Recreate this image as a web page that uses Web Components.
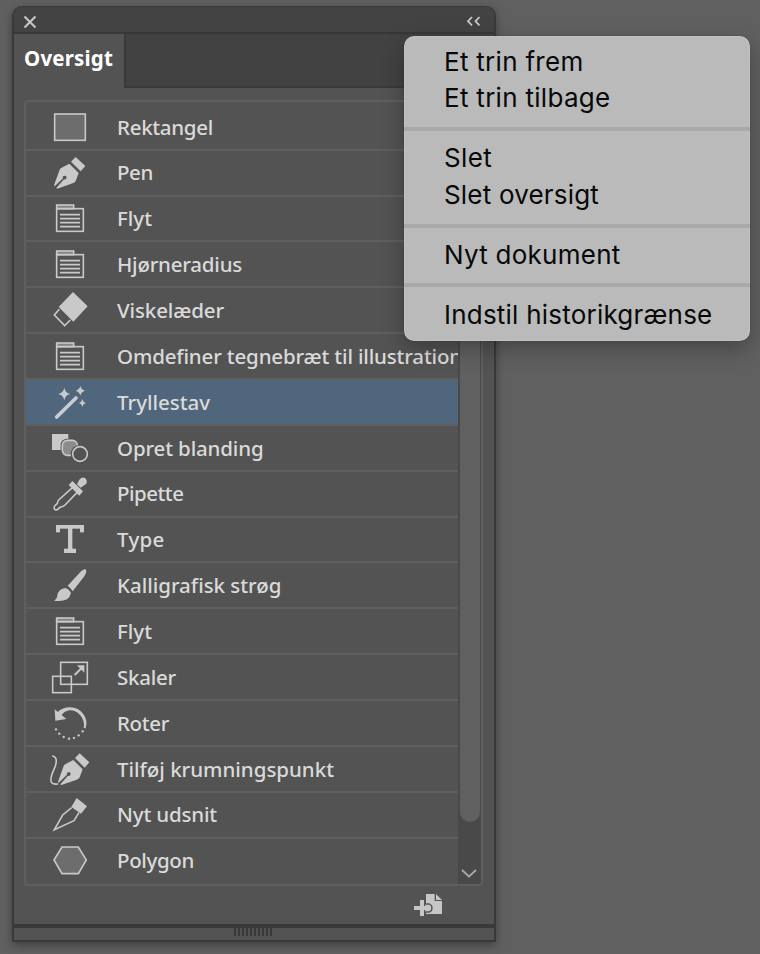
<!DOCTYPE html>
<html lang="da">
<head>
<meta charset="utf-8">
<title>Oversigt</title>
<style>
html, body{
    margin: 0;
    height: 100%;
}
body{
    width: 760px;
    height: 954px;
    overflow: hidden;
    background: #606060;
    font-family: "Noto Sans", "Open Sans", sans-serif;
}
</style>
</head>
<body>
<history-app></history-app>

<script>
// tool icons, each one drawn in a 132 unit square shown at 44px
const nib = `<path d="M167 171 196 198 182 214 153 185Z"/>
    <path d="M148 191 176 219 167 243Q164 248 158 250L112 266 109 264 132 238A5.500 5.500 0 1 0 129 235L104 259 102 256 119 209Q121 205 125 203Z"/>`;
const icons = {
    rectangle: ['84 15', '<rect x="104" y="42" width="92" height="79" fill="#6d6d6d" class="s"/>'],
    pen: ['84 153', nib],
    doc: ['84 290', `<rect x="110" y="317" width="51" height="11" fill="#858585" class="s"/>
        <rect x="110" y="328" width="80" height="68" class="n s"/>
        <path class="n s" d="M120 346H180M120 358H180M120 370H180M120 382H180"/>`],
    eraser: ['84 146', `<path d="M159 158 203 201 160 247 116 203Z"/>
        <path class="n s" d="M118 210 103 227 134 259 151 242"/>`],
    wand: ['84 16', `<path class="n" stroke="#c8cdd2" stroke-width="11" stroke-linecap="round" d="M110 127 168 70"/>
        <path d="M133 39Q136 55 151 58Q136 61 133 77Q130 61 114 58Q130 55 133 39Z"/>
        <path d="M181 34Q184 45 195 48Q184 51 181 63Q178 51 167 48Q178 45 181 34Z"/>
        <path d="M187 74Q189 83 198 85Q189 87 187 96Q185 87 177 85Q185 83 187 74Z"/>`],
    blend: ['84 153', `<rect x="96" y="177" width="49" height="48"/>
        <rect x="122" y="191" width="54" height="54" rx="19" fill="#535353"/>
        <rect x="127" y="196" width="45" height="45" rx="15" fill="#8c8c8c" class="s"/>
        <circle cx="180" cy="237" r="28" fill="#535353"/>
        <circle cx="180" cy="237" r="22" class="n s"/>`],
    pipette: ['84 291', `<path d="M171 328 178 314Q186 305 195 309Q203 316 199 326L182 338Z"/>
        <path d="M157 318 189 349 178 362 146 330Z"/>
        <path class="n s" d="M157 338 116 375Q113 379 112 385L104 393Q100 402 106 404Q113 407 118 398L125 395Q131 394 135 390L171 353"/>`],
    type: ['84 9', `<rect x="108" y="33" width="84" height="11"/><rect x="108" y="33" width="12" height="22"/>
        <rect x="180" y="33" width="12" height="22"/><rect x="144" y="36" width="13" height="78"/>
        <rect x="132" y="104" width="36" height="13"/>`],
    brush: ['84 146', `<path d="M143 214 184 170Q194 162 199 167Q200 176 193 186L158 231Q153 222 143 214Z"/>
        <path d="M137 221Q147 225 153 235Q150 249 141 255Q126 263 102 259Q112 253 112 243Q115 224 137 221Z"/>`],
    scale: ['84 16', `<rect x="122" y="38" width="80" height="66" class="n s"/>
        <rect x="98" y="80" width="56" height="49" class="n s"/>
        <path class="n" stroke="#c9c9c9" stroke-width="6" d="M164 76 186 54"/><path d="M171 47H193V69Z"/>`],
    rotate: ['84 154', `<path d="M104 179 106 213 139 208Z"/>
        <path d="M112 188Q128 173 150 173Q176 174 190 193Q204 212 197 236L191 235Q195 214 181 197Q167 181 148 182Q132 184 122 200Z"/>
        <circle cx="108" cy="239" r="3.5"/><circle cx="118" cy="252" r="3.5"/><circle cx="131" cy="262" r="3.5"/>
        <circle cx="147" cy="267" r="3.5"/><circle cx="162" cy="265" r="3.5"/><circle cx="176" cy="257" r="3.5"/><circle cx="188" cy="245" r="3.5"/>`],
    curvature: ['84 292', `<g transform="translate(12 140)">${nib}</g>
        <path class="n s" stroke-linecap="round" d="M98 319Q113 322 107 346C102 363 88 382 94 397Q98 405 113 403"/>`],
    slice: ['144 9', `<path d="M230 24 261 49 243 71 214 51Z"/>
        <path class="n s" d="M215 53 188 75 163 119 222 92 237 68"/>`],
    polygon: ['144 147', '<path class="s" fill="#6d6d6d" d="M162 213 186 174H235L259 213 235 254H186Z"/>']
};

class ToolIcon extends HTMLElement {
    connectedCallback() {
        const [origin, shapes] = icons[this.getAttribute('name')];
        this.attachShadow({ mode: 'open' }).innerHTML = `
<style>
:host{ display: block; width: 44px; height: 44px; }
svg{ display: block; overflow: visible; fill: #c9c9c9; }
.n{ fill: none; }
.s{ stroke: #c9c9c9; stroke-width: 4.8; }
</style>
<svg width="44" height="44" viewBox="${origin} 132 132">${shapes}</svg>`;
    }
}
customElements.define('tool-icon', ToolIcon);

// text tracked so that it takes the given width
class FitText extends HTMLElement {
    connectedCallback() {
        this.attachShadow({ mode: 'open' }).innerHTML = `
<style>
:host{ display: block; white-space: nowrap; }
span{ display: inline-block; }
</style>
<span><slot></slot></span>`;
        const span = this.shadowRoot.querySelector('span');
        const extra = this.getAttribute('width') - span.getBoundingClientRect().width;
        span.style.letterSpacing = extra / this.textContent.length + 'px';
    }
}
customElements.define('fit-text', FitText);

class HistoryRow extends HTMLElement {
    connectedCallback() {
        this.attachShadow({ mode: 'open' }).innerHTML = `
<style>
:host{
    display: flex;
    align-items: center;
    box-sizing: border-box;
    flex: none;
    height: 45.86px;
    padding-left: 22px;
    border-bottom: 2px solid #5f5f5f;
    overflow: hidden;
    color: #dadada;
    font-size: 20.5px;
    font-weight: 500;
    line-height: 28px;
}
:host([selected]){ background: #50667c; }
:host(:last-child){ border-color: transparent; }
fit-text{ margin: 0 0 .3px 25px; }
</style>
<tool-icon name="${this.getAttribute('icon')}"></tool-icon>
<fit-text width="${this.getAttribute('width')}">${this.textContent}</fit-text>`;
    }
}
customElements.define('history-row', HistoryRow);

class HistoryList extends HTMLElement {
    connectedCallback() {
        this.attachShadow({ mode: 'open' }).innerHTML = `
<style>
:host{
    display: flex;
    box-sizing: border-box;
    height: 786px;
    margin: 12px 11px 0 10px;
    border: 2px solid #5f5f5f;
    border-radius: 4px;
}
.rows{
    display: flex;
    flex-direction: column;
    width: 432px;
    padding-top: 2.8px;
    overflow: hidden;
}
.track{
    display: flex;
    flex-direction: column;
    align-items: center;
    justify-content: space-between;
    flex: 1;
    background: #494949;
}
.thumb{
    width: 20px;
    height: 720px;
    border-radius: 0 0 10px 10px;
    background: #606060;
}
svg{ display: block; margin: 0 2px 5px 0; }
</style>
<div class="rows"><slot></slot></div>
<div class="track">
    <div class="thumb"></div>
    <svg width="18" height="12" fill="none" stroke="#a8a8a8" stroke-width="1.8"><path d="M2 3 9 9.5 16 3"/></svg>
</div>`;
    }
}
customElements.define('history-list', HistoryList);

class HistoryPanel extends HTMLElement {
    connectedCallback() {
        this.attachShadow({ mode: 'open' }).innerHTML = `
<style>
:host{
    display: flex;
    flex-direction: column;
    box-sizing: border-box;
    width: 484px;
    height: 936px;
    border: 2px solid #393939;
    border-top-width: 1px;
    border-radius: 10px 10px 1px 1px;
    background: #535353;
    overflow: hidden;
    box-shadow: 0 3px 10px rgba(0,0,0,.35);
}
.bar{
    display: flex;
    justify-content: space-between;
    box-sizing: border-box;
    height: 27px;
    padding: 9px 13px 0 10px;
    border-bottom: 2px solid #373737;
    background: #434343;
}
.bar svg{ display: block; }
.tabs{
    display: flex;
    height: 54px;
}
.tab{
    box-sizing: border-box;
    width: 110px;
    padding: 10px 0 0 10px;
    color: #fff;
    font-size: 20.5px;
    font-weight: 700;
    line-height: 28px;
}
.rest{
    flex: 1;
    border-left: 2px solid #393939;
    border-bottom: 2px solid #393939;
    background: #424242;
}
.foot{
    display: flex;
    justify-content: flex-end;
    box-sizing: border-box;
    height: 38px;
    padding: 8px 52px 0 0;
}
.grip{
    display: flex;
    justify-content: center;
    gap: 2px;
    height: 12px;
    padding-right: 2px;
    border-top: 4px solid #393939;
}
.grip i{
    width: 2px;
    height: 8px;
    background: #383838;
}
</style>
<div class="bar">
    <svg width="12" height="12" stroke="#c4c4c4" stroke-width="2.2"><path d="M.5.5 11.5 11.5M11.5.5.5 11.5"/></svg>
    <svg width="15" height="11" fill="none" stroke="#c9c9c9" stroke-width="1.8"><path d="M6 1 2 5.2 6 9.5M13.5 1 9.5 5.2 13.5 9.5"/></svg>
</div>
<div class="tabs">
    <div class="tab"><fit-text width="89">Oversigt</fit-text></div>
    <div class="rest"></div>
</div>
<slot></slot>
<div class="foot">
    <svg width="28" height="22" viewBox="102 312 84 66" fill="#c6c6c6">
        <path d="M138 312H164V333H186V372H138Z"/>
        <path d="M168 312 186 330H168Z"/>
        <path d="M136 342H148Q156 345 156 354Q156 363 148 366H136" stroke="#535353" stroke-width="4"/>
        <path d="M120 330H132V348H145Q150 350 150 354Q150 358 145 360H132V378H120V360H102V348H120Z"/>
    </svg>
</div>
<div class="grip"><i></i><i></i><i></i><i></i><i></i><i></i><i></i><i></i><i></i><i></i></div>`;
    }
}
customElements.define('history-panel', HistoryPanel);

class MenuItem extends HTMLElement {
    connectedCallback() {
        this.attachShadow({ mode: 'open' }).innerHTML = `
<style>
:host{
    display: block;
    height: 36.7px;
    padding-left: 40px;
    color: #080808;
    font: 430 26px/38.7px Inter, "Liberation Sans", sans-serif;
}
</style>
<fit-text width="${this.getAttribute('width')}">${this.textContent}</fit-text>`;
    }
}
customElements.define('menu-item', MenuItem);

class MenuLine extends HTMLElement {
    connectedCallback() {
        this.attachShadow({ mode: 'open' }).innerHTML = `
<style>
:host{
    display: block;
    height: 4px;
    margin: 10.7px 0 8.6px;
    background: #a9a9a9;
}
</style>`;
    }
}
customElements.define('menu-line', MenuLine);

class PopupMenu extends HTMLElement {
    connectedCallback() {
        this.attachShadow({ mode: 'open' }).innerHTML = `
<style>
:host{
    display: block;
    position: absolute;
    left: 404px;
    top: 36px;
    box-sizing: border-box;
    width: 346px;
    height: 305px;
    padding-top: 6.8px;
    border-radius: 10px;
    background: #bababa;
    box-shadow: 0 0 1px rgba(0,0,0,.6), 0 8px 22px rgba(0,0,0,.28), inset 0 0 0 1px rgba(255,255,255,.12);
}
</style>
<slot></slot>`;
    }
}
customElements.define('popup-menu', PopupMenu);

class HistoryApp extends HTMLElement {
    connectedCallback() {
        this.attachShadow({ mode: 'open' }).innerHTML = `
<style>
:host{
    display: block;
    position: relative;
    box-sizing: border-box;
    height: 954px;
    padding: 6px 0 0 12px;
}
</style>
<history-panel>
    <history-list>
        <history-row icon="rectangle" width="96">Rektangel</history-row>
        <history-row icon="pen" width="36">Pen</history-row>
        <history-row icon="doc" width="35">Flyt</history-row>
        <history-row icon="doc" width="125">Hjørneradius</history-row>
        <history-row icon="eraser" width="107">Viskelæder</history-row>
        <history-row icon="doc" width="345">Omdefiner tegnebræt til illustration</history-row>
        <history-row icon="wand" width="93" selected>Tryllestav</history-row>
        <history-row icon="blend" width="146.5">Opret blanding</history-row>
        <history-row icon="pipette" width="66.5">Pipette</history-row>
        <history-row icon="type" width="47.5">Type</history-row>
        <history-row icon="brush" width="164.5">Kalligrafisk strøg</history-row>
        <history-row icon="doc" width="35">Flyt</history-row>
        <history-row icon="scale" width="59">Skaler</history-row>
        <history-row icon="rotate" width="52">Roter</history-row>
        <history-row icon="curvature" width="217">Tilføj krumningspunkt</history-row>
        <history-row icon="slice" width="100">Nyt udsnit</history-row>
        <history-row icon="polygon" width="77">Polygon</history-row>
    </history-list>
</history-panel>
<popup-menu>
    <menu-item width="139.5">Et trin frem</menu-item>
    <menu-item width="166.5">Et trin tilbage</menu-item>
    <menu-line></menu-line>
    <menu-item width="48">Slet</menu-item>
    <menu-item width="155">Slet oversigt</menu-item>
    <menu-line></menu-line>
    <menu-item width="176.5">Nyt dokument</menu-item>
    <menu-line></menu-line>
    <menu-item width="268.5">Indstil historikgrænse</menu-item>
</popup-menu>`;
    }
}
customElements.define('history-app', HistoryApp);
</script>
</body>
</html>
